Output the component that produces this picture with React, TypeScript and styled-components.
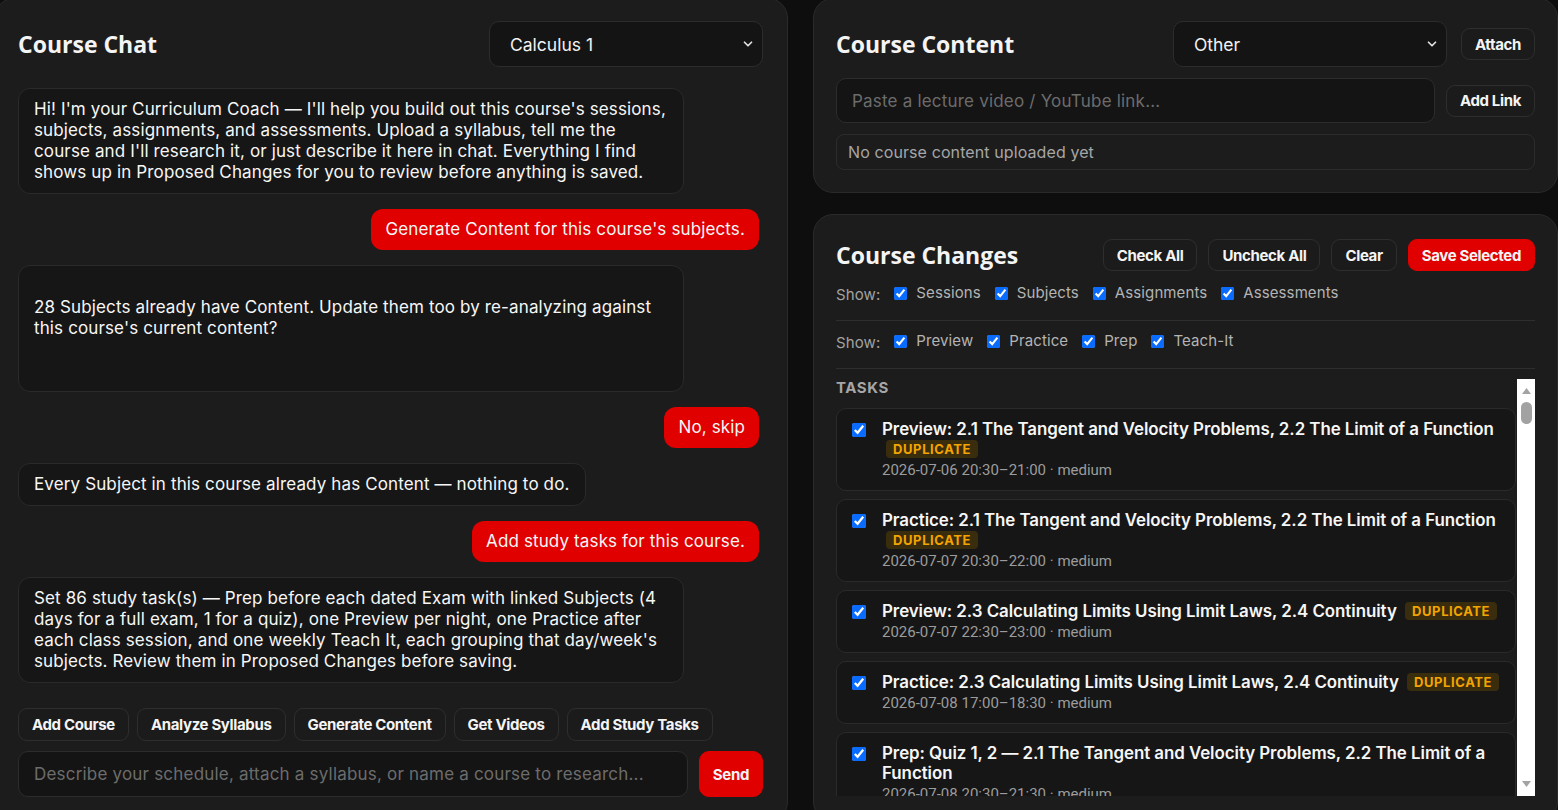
import React from 'react';
import styled, { createGlobalStyle } from 'styled-components';
import { ChevronDown } from 'lucide-react';

const GlobalStyle = createGlobalStyle`
  * { box-sizing: border-box; }
  html, body { margin: 0; padding: 0; background: #0e0e0e; overflow: hidden; }
  body { font-family: Inter, "Liberation Sans", sans-serif; color: #f2f2f2; }
  button, input, select { font-family: inherit; }
`;

const Page = styled.div`
  display: grid;
  grid-template-columns: 794px 745px;
  grid-template-rows: minmax(0, 1fr);
  column-gap: 25px;
  height: 824px;
  margin: -2px 0 0 -6px;
`;

const Panel = styled.section`
  background: #1c1c1c;
  border: 1px solid #2a2a2a;
  border-radius: 20px;
  display: flex;
  flex-direction: column;
  min-height: 0;
`;

const ChatPanel = styled(Panel)`
  padding: 22px 24px 24px 23px;
`;

const RightColumn = styled.div`
  display: flex;
  flex-direction: column;
  gap: 21px;
  min-height: 0;
`;

const ContentPanel = styled(Panel)`
  padding: 22px;
  gap: 11px;
`;

const ChangesPanel = styled(Panel)`
  flex: 1;
  padding: 22px 22px 25px;
`;

const HeaderRow = styled.div<{ $gap?: number }>`
  display: flex;
  align-items: center;
  gap: ${(p) => p.$gap ?? 14}px;
  min-height: 36px;
`;

const Title = styled.h2`
  flex: 1;
  margin: 0;
  font-family: "Open Sans", "Noto Sans", sans-serif;
  font-weight: 700;
  font-size: 23px;
  color: #f4f4f4;
`;

const SelectWrap = styled.div`
  position: relative;
  width: 274px;
  height: 46px;
  flex: none;
`;

const Select = styled.select`
  width: 100%;
  height: 100%;
  appearance: none;
  background: #141414;
  border: 1px solid #2c2c2c;
  border-radius: 10px;
  color: #f2f2f2;
  font-size: 17.5px;
  padding: 0 40px 0 20px;
  outline: none;
`;

const Chevron = styled(ChevronDown)`
  position: absolute;
  right: 8px;
  top: 50%;
  transform: translateY(-50%);
  pointer-events: none;
  color: #e0e0e0;
`;

const Button = styled.button<{ $primary?: boolean; $h?: number }>`
  flex: none;
  height: ${(p) => p.$h ?? 32}px;
  padding: 0 13px;
  border-radius: ${(p) => ((p.$h ?? 32) > 40 ? 10 : 9)}px;
  border: 1px solid ${(p) => (p.$primary ? '#e00000' : '#2e2e2e')};
  background: ${(p) => (p.$primary ? '#e00000' : '#1b1b1b')};
  color: #f4f4f4;
  font-size: 15px;
  font-weight: 700;
  letter-spacing: -0.35px;
  cursor: pointer;
`;

const Messages = styled.div`
  flex: 1;
  min-height: 0;
  overflow: hidden;
  display: flex;
  flex-direction: column;
  gap: 15px;
  margin-top: 21px;
  padding-right: 4px;
`;

const Bubble = styled.div<{ $user?: boolean }>`
  align-self: ${(p) => (p.$user ? 'flex-end' : 'flex-start')};
  max-width: 666px;
  padding: 10px ${(p) => (p.$user ? 14 : 15)}px;
  border-radius: 12px;
  background: ${(p) => (p.$user ? '#e00000' : '#161616')};
  border: ${(p) => (p.$user ? 'none' : '1px solid #2a2a2a')};
  color: #f6f6f6;
  font-size: 17px;
  letter-spacing: 0.13px;
  line-height: 21px;
  white-space: pre-wrap;
`;

const ActionRow = styled.div`
  display: flex;
  gap: 8px;
  margin-bottom: 10px;
`;

const InputRow = styled.div`
  display: flex;
  gap: 11px;
  align-items: center;
`;

const TextInput = styled.input<{ $h?: number }>`
  flex: 1;
  min-width: 0;
  height: ${(p) => p.$h ?? 46}px;
  background: #141414;
  border: 1px solid #2c2c2c;
  border-radius: 10px;
  padding: 0 15px;
  color: #f2f2f2;
  font-size: 17px;
  letter-spacing: 0.2px;
  outline: none;
  &::placeholder { color: #6c6c6c; }
`;

const EmptyNote = styled.div`
  height: 36px;
  display: flex;
  align-items: center;
  padding: 0 11px;
  border: 1px solid #2c2c2c;
  border-radius: 8px;
  color: #a6a6a6;
  font-size: 16px;
  letter-spacing: 0.1px;
`;

const FilterRow = styled.div`
  display: flex;
  align-items: center;
  gap: 14px;
  padding: 10px 0 17px;
  border-bottom: 1px solid #2e2e2e;
  line-height: 20px;
`;

const ShowLabel = styled.span`
  color: #a2a2a2;
  font-size: 15px;
  letter-spacing: 0.1px;
  transform: translateY(2px);
`;

const FilterItem = styled.label`
  display: flex;
  align-items: center;
  gap: 9px;
  color: #b4b4b4;
  font-size: 15px;
  letter-spacing: 0.1px;
`;

const Check = styled.input.attrs({ type: 'checkbox' })<{ $size?: number }>`
  width: ${(p) => p.$size ?? 13}px;
  height: ${(p) => p.$size ?? 13}px;
  margin: 0;
  flex: none;
  accent-color: #0a6cff;
`;

const ListArea = styled.div`
  flex: 1;
  min-height: 0;
  margin-top: 10px;
  display: flex;
  gap: 1px;
`;

const ListScroll = styled.div`
  flex: 1;
  min-width: 0;
  overflow: hidden;
`;

const ScrollTrack = styled.div`
  flex: none;
  width: 18px;
  background: #ffffff;
  display: flex;
  flex-direction: column;
  align-items: center;
  padding: 9px 0 9px;
`;

const ScrollThumb = styled.div`
  width: 11px;
  height: 22px;
  margin-top: 8px;
  border-radius: 6px;
  background: #a2a2a2;
`;

const ScrollSpacer = styled.div`
  flex: 1;
`;

const TasksLabel = styled.div`
  font-size: 15px;
  font-weight: 700;
  color: #a6a6a6;
  letter-spacing: 0.6px;
  line-height: 18px;
  margin-bottom: 11px;
`;

const Cards = styled.div`
  display: flex;
  flex-direction: column;
  gap: 8px;
`;

const Card = styled.div`
  display: flex;
  align-items: flex-start;
  gap: 16px;
  background: #161616;
  border: 1px solid #2a2a2a;
  border-radius: 10px;
  padding: 10px 14px 9px 15px;
`;

const CardCheck = styled(Check)`
  margin-top: 4px;
`;

const CardBody = styled.div`
  flex: 1;
  min-width: 0;
`;

const CardTitle = styled.div`
  font-size: 16.9px;
  font-weight: 600;
  letter-spacing: -0.05px;
  line-height: 20px;
  color: #f6f6f6;
`;

const Badge = styled.span`
  display: inline-block;
  margin-left: 4px;
  padding: 0 7px;
  line-height: 18px;
  font-size: 13px;
  font-weight: 700;
  letter-spacing: 0.6px;
  color: #f4a400;
  background: #3a2d0d;
  border-radius: 4px;
  vertical-align: 1px;
`;

const Meta = styled.div`
  margin-top: 1px;
  font-family: Roboto, Inter, sans-serif;
  font-size: 15px;
  line-height: 21px;
  color: #9c9c9c;
`;

const Arrow = ({ down }: { down?: boolean }) => (
  <svg width="9" height="6" viewBox="0 0 9 6" aria-hidden="true">
    <path d={down ? 'M0 0 H9 L4.5 6 Z' : 'M0 6 H9 L4.5 0 Z'} fill="#a3a3a3" />
  </svg>
);

type Task = { title: string; when: string; dup?: boolean };

const baseTasks: Task[] = [
  { title: 'Preview: 2.1 The Tangent and Velocity Problems, 2.2 The Limit of a Function', when: '2026-07-06 20:30–21:00', dup: true },
  { title: 'Practice: 2.1 The Tangent and Velocity Problems, 2.2 The Limit of a Function', when: '2026-07-07 20:30–22:00', dup: true },
  { title: 'Preview: 2.3 Calculating Limits Using Limit Laws, 2.4 Continuity', when: '2026-07-07 22:30–23:00', dup: true },
  { title: 'Practice: 2.3 Calculating Limits Using Limit Laws, 2.4 Continuity', when: '2026-07-08 17:00–18:30', dup: true },
  { title: 'Prep: Quiz 1, 2 — 2.1 The Tangent and Velocity Problems, 2.2 The Limit of a Function', when: '2026-07-08 20:30–21:30' },
];

const extraSubjects = [
  '2.5 Limits Involving Infinity, 2.6 Derivatives and Rates of Change',
  '2.7 The Derivative as a Function, 3.1 Derivatives of Polynomials',
  '3.2 The Product and Quotient Rules, 3.3 Derivatives of Trigonometric Functions',
  '3.4 The Chain Rule, 3.5 Implicit Differentiation',
];

const tasks: Task[] = [...baseTasks];
for (let i = 0; tasks.length < 12; i++) {
  const subj = extraSubjects[i % extraSubjects.length];
  const kind = ['Preview', 'Practice', 'Teach-It'][i % 3];
  const dd = String(9 + Math.floor(i / 2)).padStart(2, '0');
  tasks.push({ title: `${kind}: ${subj}`, when: `2026-07-${dd} 20:30–21:30`, dup: i % 2 === 0 });
}

const messages: { user?: boolean; text: string }[] = [
  {
    text:
      "Hi! I'm your Curriculum Coach — I'll help you build out this course's sessions, subjects, assignments, and assessments. Upload a syllabus, tell me the course and I'll research it, or just describe it here in chat. Everything I find shows up in Proposed Changes for you to review before anything is saved.",
  },
  { user: true, text: "Generate Content for this course's subjects." },
  {
    text:
      "\n28 Subjects already have Content. Update them too by re-analyzing against this course's current content?\n\n\n",
  },
  { user: true, text: 'No, skip' },
  { text: 'Every Subject in this course already has Content — nothing to do.' },
  { user: true, text: 'Add study tasks for this course.' },
  {
    text:
      "Set 86 study task(s) — Prep before each dated Exam with linked Subjects (4 days for a full exam, 1 for a quiz), one Preview per night, one Practice after each class session, and one weekly Teach It, each grouping that day/week's subjects. Review them in Proposed Changes before saving.",
  },
];

const actions = ['Add Course', 'Analyze Syllabus', 'Generate Content', 'Get Videos', 'Add Study Tasks'];
const kinds = ['Sessions', 'Subjects', 'Assignments', 'Assessments'];
const taskKinds = ['Preview', 'Practice', 'Prep', 'Teach-It'];

export default function App() {
  return (
    <>
      <GlobalStyle />
      <Page>
        <ChatPanel>
          <HeaderRow>
            <Title>Course Chat</Title>
            <SelectWrap>
              <Select defaultValue="calc1">
                <option value="calc1">Calculus 1</option>
              </Select>
              <Chevron size={14} strokeWidth={3} />
            </SelectWrap>
          </HeaderRow>
          <Messages>
            {messages.map((m, i) => (
              <Bubble key={i} $user={m.user}>
                {m.text}
              </Bubble>
            ))}
          </Messages>
          <ActionRow>
            {actions.map((a) => (
              <Button key={a} $h={33} type="button">
                {a}
              </Button>
            ))}
          </ActionRow>
          <InputRow>
            <TextInput placeholder="Describe your schedule, attach a syllabus, or name a course to research..." />
            <Button $primary $h={46} type="button">
              Send
            </Button>
          </InputRow>
        </ChatPanel>

        <RightColumn>
          <ContentPanel>
            <HeaderRow>
              <Title>Course Content</Title>
              <SelectWrap>
                <Select defaultValue="other">
                  <option value="other">Other</option>
                </Select>
                <Chevron size={14} strokeWidth={3} />
              </SelectWrap>
              <Button type="button">Attach</Button>
            </HeaderRow>
            <InputRow>
              <TextInput $h={45} placeholder="Paste a lecture video / YouTube link..." />
              <Button type="button">Add Link</Button>
            </InputRow>
            <EmptyNote>No course content uploaded yet</EmptyNote>
          </ContentPanel>

          <ChangesPanel>
            <HeaderRow $gap={11}>
              <Title>Course Changes</Title>
              <Button type="button">Check All</Button>
              <Button type="button">Uncheck All</Button>
              <Button type="button">Clear</Button>
              <Button $primary type="button">
                Save Selected
              </Button>
            </HeaderRow>
            <FilterRow>
              <ShowLabel>Show:</ShowLabel>
              {kinds.map((k) => (
                <FilterItem key={k}>
                  <Check defaultChecked />
                  {k}
                </FilterItem>
              ))}
            </FilterRow>
            <FilterRow>
              <ShowLabel>Show:</ShowLabel>
              {taskKinds.map((k) => (
                <FilterItem key={k}>
                  <Check defaultChecked />
                  {k}
                </FilterItem>
              ))}
            </FilterRow>
            <ListArea>
              <ListScroll>
                <TasksLabel>TASKS</TasksLabel>
                <Cards>
                  {tasks.map((t, i) => (
                    <Card key={i}>
                      <CardCheck $size={14} defaultChecked />
                      <CardBody>
                        <CardTitle>
                          {t.title}
                          {t.dup && (
                            <>
                              {' '}
                              <Badge>DUPLICATE</Badge>
                            </>
                          )}
                        </CardTitle>
                        <Meta>{t.when} · medium</Meta>
                      </CardBody>
                    </Card>
                  ))}
                </Cards>
              </ListScroll>
              <ScrollTrack>
                <Arrow />
                <ScrollThumb />
                <ScrollSpacer />
                <Arrow down />
              </ScrollTrack>
            </ListArea>
          </ChangesPanel>
        </RightColumn>
      </Page>
    </>
  );
}
